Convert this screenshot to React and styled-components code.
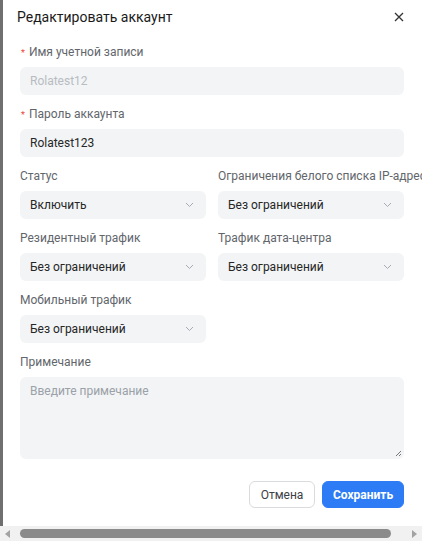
import React from "react";
import styled, { createGlobalStyle } from "styled-components";

const GlobalStyle = createGlobalStyle`
  html, body {
    margin: 0;
    padding: 0;
    background: #fff;
  }
  body {
    font-family: Roboto, "Noto Sans", "Liberation Sans", sans-serif;
    -webkit-font-smoothing: antialiased;
  }
`;

const Page = styled.div`
  width: 422px;
  height: 541px;
  display: flex;
  flex-direction: column;
  overflow: hidden;
`;

const Stage = styled.div`
  flex: 1;
  display: flex;
  min-height: 0;
`;

const Backdrop = styled.div`
  width: 3px;
  flex: none;
  background: #6f6f6f;
`;

const Modal = styled.div`
  flex: 1;
  background: #fff;
  padding: 7px 18px 0 14px;
  display: flex;
  flex-direction: column;
`;

const Header = styled.div`
  display: flex;
  align-items: center;
  justify-content: space-between;
  height: 20px;
  margin-bottom: 17px;
`;

const Title = styled.h2`
  margin: 0;
  font-size: 14px;
  font-weight: 400;
  line-height: 20px;
  color: #1a1a1a;
`;

const Close = styled.button`
  border: 0;
  background: none;
  padding: 0;
  width: 10px;
  height: 10px;
  display: flex;
  cursor: pointer;
`;

const Form = styled.div`
  width: 384px;
  margin-left: 3px;
  display: flex;
  flex-direction: column;
  gap: 11px;
`;

const Row = styled.div`
  display: grid;
  grid-template-columns: 186px 186px;
  column-gap: 12px;
`;

const Field = styled.div`
  display: flex;
  flex-direction: column;
  min-width: 0;
`;

const Label = styled.div`
  height: 17px;
  font-size: 12px;
  line-height: 17px;
  color: #62666b;
  margin-bottom: 6px;
  white-space: nowrap;
  display: flex;
  align-items: center;
`;

const Required = styled.span`
  color: #f0453a;
  font-size: 9px;
  line-height: 1;
  margin: 2px 4px 0 1px;
`;

const Input = styled.div`
  height: 28px;
  border-radius: 6px;
  background: #f2f4f5;
  display: flex;
  align-items: center;
  padding: 0 10px;
  font-size: 12px;
  color: ${(p) => (p.$disabled ? "#b8bcc2" : "#262626")};
`;

const Select = styled(Input)`
  justify-content: space-between;
  padding-right: 12px;
`;

const Textarea = styled.div`
  position: relative;
  height: 82px;
  border-radius: 6px;
  background: #f2f4f5;
  padding: 5px 10px;
  box-sizing: border-box;
  font-size: 12px;
  line-height: 18px;
  color: #9ba1a8;
`;

const Grip = styled.svg`
  position: absolute;
  right: 2px;
  bottom: 2px;
`;

const Footer = styled.div`
  display: flex;
  justify-content: flex-end;
  gap: 7px;
  margin-top: 22px;
`;

const Button = styled.button`
  height: 27px;
  border-radius: 6px;
  font-family: inherit;
  font-size: 12px;
  padding: 0;
  border: 1px solid ${(p) => (p.$primary ? "#2d7cf6" : "#d9dbde")};
  background: ${(p) => (p.$primary ? "#2d7cf6" : "#fff")};
  color: ${(p) => (p.$primary ? "#fff" : "#3c4046")};
  font-weight: ${(p) => (p.$primary ? 700 : 400)};
  width: ${(p) => (p.$primary ? "82px" : "66px")};
`;

const Scrollbar = styled.div`
  height: 15px;
  flex: none;
  background: #f1f1f1;
  display: flex;
  align-items: center;
  padding: 0 5px;
  gap: 4px;
`;

const Arrow = styled.div`
  width: 0;
  height: 0;
  border-top: 4px solid transparent;
  border-bottom: 4px solid transparent;
  ${(p) =>
    p.$right
      ? "border-left: 5px solid #a3a3a3; margin-left: auto;"
      : "border-right: 5px solid #a3a3a3;"}
`;

const Thumb = styled.div`
  width: 371px;
  height: 9px;
  border-radius: 5px;
  background: #8b8b8b;
  margin-left: 6px;
`;

const Chevron = () => (
  <svg width="9" height="6" viewBox="0 0 9 6" fill="none">
    <path d="M1 1l3.5 3.5L8 1" stroke="#a6abb2" strokeWidth="1" />
  </svg>
);

const SelectBox = ({ value }) => (
  <Select>
    {value}
    <Chevron />
  </Select>
);

export default function App() {
  return (
    <Page>
      <GlobalStyle />
      <Stage>
        <Backdrop />
        <Modal>
          <Header>
            <Title>Редактировать аккаунт</Title>
            <Close aria-label="close">
              <svg width="10" height="10" viewBox="0 0 10 10">
                <path d="M1 1l8 8M9 1l-8 8" stroke="#333" strokeWidth="1.3" />
              </svg>
            </Close>
          </Header>
          <Form>
            <Field>
              <Label>
                <Required>*</Required>Имя учетной записи
              </Label>
              <Input $disabled>Rolatest12</Input>
            </Field>
            <Field>
              <Label>
                <Required>*</Required>Пароль аккаунта
              </Label>
              <Input>Rolatest123</Input>
            </Field>
            <Row>
              <Field>
                <Label>Статус</Label>
                <SelectBox value="Включить" />
              </Field>
              <Field>
                <Label>Ограничения белого списка IP-адресов</Label>
                <SelectBox value="Без ограничений" />
              </Field>
            </Row>
            <Row>
              <Field>
                <Label>Резидентный трафик</Label>
                <SelectBox value="Без ограничений" />
              </Field>
              <Field>
                <Label>Трафик дата-центра</Label>
                <SelectBox value="Без ограничений" />
              </Field>
            </Row>
            <Row>
              <Field>
                <Label>Мобильный трафик</Label>
                <SelectBox value="Без ограничений" />
              </Field>
            </Row>
            <Field>
              <Label>Примечание</Label>
              <Textarea>
                Введите примечание
                <Grip width="7" height="7" viewBox="0 0 7 7">
                  <path d="M6 1L1 6M6 4L4 6" stroke="#555" strokeWidth="0.8" />
                </Grip>
              </Textarea>
            </Field>
          </Form>
          <Footer>
            <Button>Отмена</Button>
            <Button $primary>Сохранить</Button>
          </Footer>
        </Modal>
      </Stage>
      <Scrollbar>
        <Arrow />
        <Thumb />
        <Arrow $right />
      </Scrollbar>
    </Page>
  );
}
